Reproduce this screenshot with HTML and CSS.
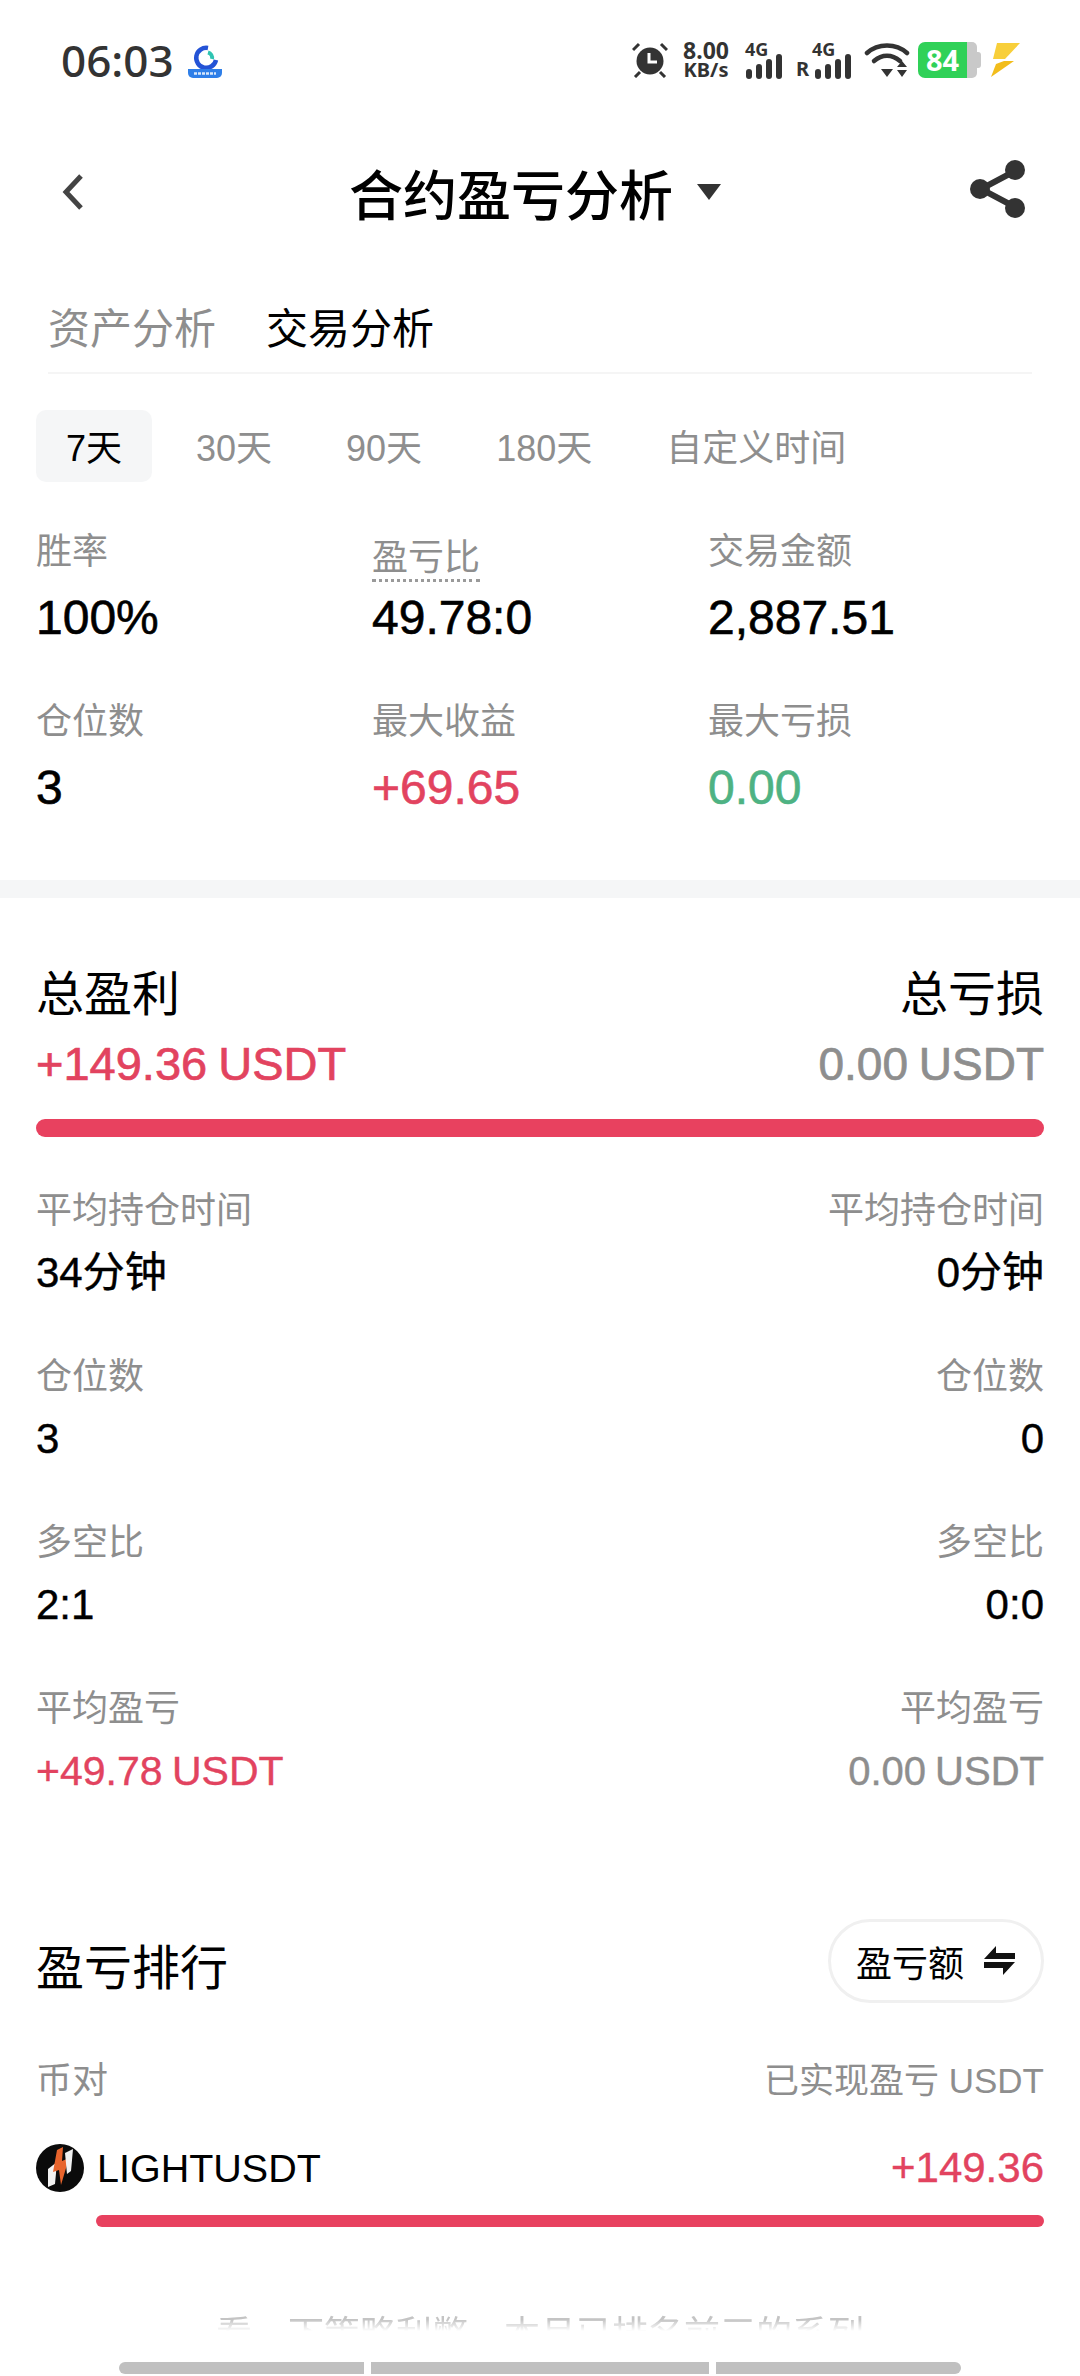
FILE: index.html
```html
<!DOCTYPE html>
<html lang="zh-CN">
<head>
    <meta charset="UTF-8">
    <meta name="viewport" content="width=device-width, initial-scale=1.0">
    <title>合约盈亏分析</title>
    <link rel="stylesheet" href="styles.css">
</head>
<body>
    <div class="status-bar">
        <div class="status-left">
            <span class="time">06:03</span>
            <svg class="app-icon" viewBox="0 0 34 35">
                <rect width="34" height="35" rx="5" fill="#fff"/>
                <path d="M20 5A10 10 0 1 0 28 17" fill="none" stroke="#2453d6" stroke-width="4.500"/>
                <path d="M20 9.500A5.500 5.500 0 0 1 24 16" fill="none" stroke="#2fc4b2" stroke-width="4"/>
                <path d="M0 26H34V30a5 5 0 0 1-5 5H5a5 5 0 0 1-5-5Z" fill="#2f7fe8"/>
                <path d="M6 30.500H28" stroke="#d8e8fb" stroke-width="2.500" stroke-dasharray="3 1"/>
            </svg>
        </div>
        <div class="status-right">
            <svg class="alarm" viewBox="0 0 36 36">
                <circle cx="18" cy="19" r="13.500" fill="#333"/>
                <path d="M17 11v9h8" fill="none" stroke="#fff" stroke-width="3"/>
                <path d="M1 8 7 2M35 8 29 2M8 30 3 35M28 30l5 5" stroke="#333" stroke-width="3"/>
            </svg>
            <div class="speed"><span class="speed-num">8.00</span><span>KB/s</span></div>
            <div class="signal">
                <span class="net-label">4G</span>
                <svg viewBox="0 0 40 25" class="bars">
                    <rect x="1" y="15" width="6" height="10" rx="3" fill="#333"/>
                    <rect x="11" y="10" width="6" height="15" rx="3" fill="#333"/>
                    <rect x="21" y="5" width="6" height="20" rx="3" fill="#333"/>
                    <rect x="31" y="0" width="6" height="25" rx="3" fill="#333"/>
                </svg>
            </div>
            <div class="signal signal-r">
                <span class="net-label">4G</span>
                <div class="r-row">
                    <span class="r-mark">R</span>
                    <svg viewBox="0 0 40 25" class="bars">
                        <rect x="1" y="15" width="6" height="10" rx="3" fill="#333"/>
                        <rect x="11" y="10" width="6" height="15" rx="3" fill="#333"/>
                        <rect x="21" y="5" width="6" height="20" rx="3" fill="#333"/>
                        <rect x="31" y="0" width="6" height="25" rx="3" fill="#333"/>
                    </svg>
                </div>
            </div>
            <svg class="wifi" viewBox="0 0 46 36">
                <path d="M3 11C14 1 32 1 43 11" fill="none" stroke="#333" stroke-width="4.500" stroke-linecap="round"/>
                <path d="M10 19C18 12 28 12 36 19" fill="none" stroke="#333" stroke-width="4.500" stroke-linecap="round"/>
                <path d="M17 27H29L23 35Z" fill="#333"/>
                <path d="M38 19 43 25H33ZM38 35 43 28H33Z" fill="#333"/>
            </svg>
            <div class="battery">
                <div class="battery-fill">84</div>
                <div class="battery-rest"></div>
                <div class="battery-nub"></div>
            </div>
            <svg class="bolt" viewBox="0 0 30 34">
                <path d="M7 0H30L15 16H3Z" fill="#f8cf3a"/>
                <path d="M14 18H24L1 34 6 21Z" fill="#f2bd1c"/>
            </svg>
        </div>
    </div>

    <header class="top-bar">
        <svg class="back" viewBox="0 0 24 38">
            <path d="M20 3 5 19 20 35" fill="none" stroke="#444" stroke-width="5"/>
        </svg>
        <div class="title-wrap">
            <h1>合约盈亏分析</h1>
            <span class="caret"></span>
        </div>
        <svg class="share" viewBox="0 0 56 58">
            <path d="M45 11 11 29 45 47" fill="none" stroke="#333" stroke-width="6"/>
            <circle cx="45" cy="10" r="10" fill="#333"/>
            <circle cx="10" cy="29" r="10" fill="#333"/>
            <circle cx="45" cy="48" r="10" fill="#333"/>
        </svg>
    </header>

    <nav class="tabs">
        <a class="tab">资产分析</a>
        <a class="tab tab-active">交易分析</a>
    </nav>

    <div class="periods">
        <span class="period period-active">7天</span>
        <span class="period">30天</span>
        <span class="period">90天</span>
        <span class="period">180天</span>
        <span class="period">自定义时间</span>
    </div>

    <section class="stats">
        <div class="stat">
            <div class="stat-label">胜率</div>
            <div class="stat-value">100%</div>
        </div>
        <div class="stat">
            <div class="stat-label stat-label-tip"><span class="dotted">盈亏比</span></div>
            <div class="stat-value">49.78:0</div>
        </div>
        <div class="stat">
            <div class="stat-label">交易金额</div>
            <div class="stat-value">2,887.51</div>
        </div>
        <div class="stat">
            <div class="stat-label">仓位数</div>
            <div class="stat-value">3</div>
        </div>
        <div class="stat">
            <div class="stat-label">最大收益</div>
            <div class="stat-value red">+69.65</div>
        </div>
        <div class="stat">
            <div class="stat-label">最大亏损</div>
            <div class="stat-value green">0.00</div>
        </div>
    </section>

    <div class="band"></div>

    <section class="totals">
        <div class="split">
            <div class="total-title">总盈利</div>
            <div class="total-title">总亏损</div>
        </div>
        <div class="split total-amounts">
            <div class="red">+149.36 USDT</div>
            <div class="gray">0.00 USDT</div>
        </div>
        <div class="bar"></div>

        <div class="compare">
            <div class="split compare-label"><span>平均持仓时间</span><span>平均持仓时间</span></div>
            <div class="split compare-value"><span>34分钟</span><span>0分钟</span></div>
        </div>
        <div class="compare">
            <div class="split compare-label"><span>仓位数</span><span>仓位数</span></div>
            <div class="split compare-value"><span>3</span><span>0</span></div>
        </div>
        <div class="compare">
            <div class="split compare-label"><span>多空比</span><span>多空比</span></div>
            <div class="split compare-value"><span>2:1</span><span>0:0</span></div>
        </div>
        <div class="compare">
            <div class="split compare-label"><span>平均盈亏</span><span>平均盈亏</span></div>
            <div class="split compare-value"><span class="red">+49.78 USDT</span><span class="gray">0.00 USDT</span></div>
        </div>
    </section>

    <section class="ranking">
        <div class="split rank-head">
            <div class="total-title rank-title">盈亏排行</div>
            <div class="pill">
                盈亏额
                <svg viewBox="0 0 32 30">
                    <path d="M12 0 0 13H31V7H12ZM19 29 31 16H0V22H19Z" fill="#111"/>
                </svg>
            </div>
        </div>
        <div class="split rank-columns"><span>币对</span><span>已实现盈亏 USDT</span></div>
        <div class="split rank-row">
            <div class="coin">
                <svg class="coin-icon" viewBox="0 0 48 48">
                    <circle cx="24" cy="24" r="24" fill="#0b0b0b"/>
                    <path d="M12 25 21 18 19 40 12 43Z" fill="#f2f2f2"/>
                    <path d="M21 6 27 3 26 17 33 14 25 41 23 26 17 28Z" fill="#e8642c"/>
                    <path d="M29 9 37 5 35 27 31 30Z" fill="#f2f2f2"/>
                </svg>
                LIGHTUSDT
            </div>
            <div class="red rank-amount">+149.36</div>
        </div>
        <div class="bar bar-thin"></div>
    </section>

    <div class="clipped-wrap">
        <p class="clipped">看一下策略利弊，本月已排名前三的系列</p>
    </div>

    <div class="home-bars">
        <span class="home-a"></span>
        <span class="home-b"></span>
        <span class="home-c"></span>
    </div>
</body>
</html>
```

FILE: styles.css
```css
* {
    box-sizing: border-box;
}
html, body {
    margin: 0;
    padding: 0;
}
body {
    width: 1080px;
    height: 2376px;
    overflow: hidden;
    background-color: #ffffff;
    color: #000000;
    font-family: "Liberation Sans", "Noto Sans CJK SC", sans-serif;
}
.red {
    color: #e2435f;
}
.green {
    color: #4eb283;
}
.gray {
    color: #8e8e8e;
}
.split {
    display: flex;
    justify-content: space-between;
    align-items: center;
}

/* status bar */
.status-bar {
    height: 120px;
    display: flex;
    justify-content: space-between;
    align-items: center;
    padding: 0 60px 0 61px;
}
.status-left {
    display: flex;
    align-items: center;
    gap: 14px;
}
.time {
    font-family: "Noto Sans", sans-serif;
    font-size: 44px;
    font-weight: 500;
    color: #333333;
}
.app-icon {
    width: 34px;
    height: 35px;
}
.status-right {
    display: flex;
    align-items: center;
    color: #333333;
    font-family: "Noto Sans", sans-serif;
    font-weight: 700;
}
.alarm {
    width: 36px;
    height: 36px;
    margin-right: 15px;
}
.speed {
    display: flex;
    flex-direction: column;
    align-items: center;
    font-size: 20px;
    line-height: 20px;
    width: 46px;
    margin-right: 16px;
}
.speed-num {
    font-size: 23px;
}
.signal {
    display: flex;
    flex-direction: column;
    width: 42px;
    margin-right: 9px;
}
.signal-r {
    width: 58px;
    margin-right: 10px;
}
.signal-r .net-label {
    margin-left: 16px;
}
.net-label {
    font-size: 18px;
    line-height: 15px;
    margin-bottom: -3px;
}
.bars {
    width: 40px;
    height: 25px;
    display: block;
}
.r-row {
    display: flex;
    align-items: flex-end;
    gap: 4px;
}
.r-mark {
    font-size: 20px;
    line-height: 20px;
    width: 14px;
}
.wifi {
    width: 46px;
    height: 36px;
    margin-right: 8px;
}
.battery {
    display: flex;
    align-items: center;
    width: 63px;
    height: 36px;
    margin-right: 9px;
}
.battery-fill {
    width: 49px;
    height: 36px;
    background-color: #30d158;
    border-radius: 7px 0 0 7px;
    color: #ffffff;
    font-size: 29px;
    line-height: 36px;
    text-align: center;
}
.battery-rest {
    width: 10px;
    height: 36px;
    background-color: #c9c9c9;
    border-radius: 0 5px 5px 0;
}
.battery-nub {
    width: 4px;
    height: 16px;
    background-color: #c9c9c9;
    border-radius: 0 3px 3px 0;
}
.bolt {
    width: 30px;
    height: 34px;
}

/* title row */
.top-bar {
    height: 144px;
    display: flex;
    align-items: center;
    justify-content: space-between;
    padding: 0 54px 0 61px;
}
.back {
    width: 24px;
    height: 38px;
}
.title-wrap {
    display: flex;
    align-items: center;
    gap: 24px;
    margin-left: 15px;
}
h1 {
    margin: 0;
    font-size: 54px;
    font-weight: 500;
}
.caret {
    width: 0;
    height: 0;
    border-left: 12px solid transparent;
    border-right: 12px solid transparent;
    border-top: 16px solid #333333;
}
.share {
    width: 56px;
    height: 58px;
    margin-bottom: 6px;
}

/* tabs */
.tabs {
    margin: 0 48px;
    height: 110px;
    display: flex;
    gap: 50px;
    align-items: center;
    border-bottom: 2px solid #f5f5f5;
    padding-top: 14px;
}
.tab {
    font-size: 42px;
    color: #8e8e8e;
}
.tab-active {
    color: #000000;
}

/* time ranges */
.periods {
    display: flex;
    margin: 36px 0 0 36px;
    height: 72px;
    align-items: center;
    font-size: 36px;
    color: #8e8e8e;
}
.period {
    padding: 0 30px;
    height: 72px;
    line-height: 77px;
    margin-right: 14px;
}
.period-active {
    background-color: #f5f6f7;
    border-radius: 10px;
    color: #000000;
}

/* stat grid */
.stats {
    display: grid;
    grid-template-columns: 336px 336px 336px;
    padding: 45px 36px 0;
    row-gap: 49px;
    height: 398px;
    align-content: start;
}
.stat-label {
    font-size: 36px;
    line-height: 50px;
    color: #8e8e8e;
}
.stat-label-tip {
    height: 50px;
    padding-top: 6px;
}
.dotted {
    display: inline-block;
    line-height: 42px;
    border-bottom: 3px dotted #9a9a9a;
}
.stat-value {
    font-size: 48px;
    line-height: 60px;
    margin-top: 11px;
    -webkit-text-stroke: 0.6px;
}
.band {
    height: 18px;
    background-color: #f5f6f7;
}

/* totals */
.totals {
    padding: 65px 36px 0;
}
.total-title {
    font-size: 48px;
    line-height: 64px;
}
.total-amounts {
    font-size: 46px;
    line-height: 60px;
    margin-top: 7px;
    word-spacing: -2px;
    -webkit-text-stroke: 0.7px;
}
.total-amounts .red {
    font-size: 47px;
}
.bar {
    height: 18px;
    border-radius: 9px;
    background-color: #e8415f;
    margin-top: 25px;
}
.compare {
    height: 166px;
    padding-top: 49px;
}
.compare-label {
    font-size: 36px;
    line-height: 50px;
    color: #8e8e8e;
}
.compare-value {
    font-size: 42px;
    line-height: 56px;
    margin-top: 9px;
    -webkit-text-stroke: 0.4px;
}
.compare-value .gray {
    font-size: 40px;
    word-spacing: -2px;
}
.compare-value .red {
    font-size: 41px;
    word-spacing: -2px;
}

/* ranking */
.ranking {
    padding: 118px 36px 0;
}
.rank-head {
    height: 84px;
}
.rank-title {
    padding-top: 16px;
}
.pill {
    display: flex;
    align-items: center;
    gap: 20px;
    height: 84px;
    width: 216px;
    justify-content: center;
    border: 3px solid #f0f0f0;
    border-radius: 42px;
    font-size: 36px;
}
.pill svg {
    width: 32px;
    height: 30px;
}
.rank-columns {
    font-size: 35px;
    line-height: 50px;
    color: #8e8e8e;
    margin-top: 53px;
}
.rank-columns span:first-child {
    font-size: 36px;
}
.rank-row {
    font-size: 39.5px;
    line-height: 56px;
    margin-top: 34px;
}
.rank-amount {
    font-size: 42px;
    -webkit-text-stroke: 0.4px;
}
.coin {
    display: flex;
    align-items: center;
    gap: 13px;
}
.coin-icon {
    width: 48px;
    height: 48px;
}
.bar-thin {
    height: 12px;
    margin: 19px 0 0 60px;
    border-radius: 6px;
}

/* text cut off above the bottom bar */
.clipped-wrap {
    margin-top: 83px;
    height: 21px;
    overflow: hidden;
    text-align: center;
    -webkit-mask-image: linear-gradient(to bottom, #000 45%, transparent);
    mask-image: linear-gradient(to bottom, #000 45%, transparent);
}
.clipped {
    margin: 0;
    font-size: 36px;
    line-height: 50px;
    color: #c4c4c4;
}

.home-bars {
    display: flex;
    gap: 7px;
    padding-left: 119px;
    margin-top: 31px;
}
.home-bars span {
    height: 12px;
    background-color: #c0c0c0;
}
.home-a {
    width: 245px;
    border-radius: 6px 0 0 6px;
}
.home-b {
    width: 338px;
}
.home-c {
    width: 245px;
    border-radius: 0 6px 6px 0;
}
```
